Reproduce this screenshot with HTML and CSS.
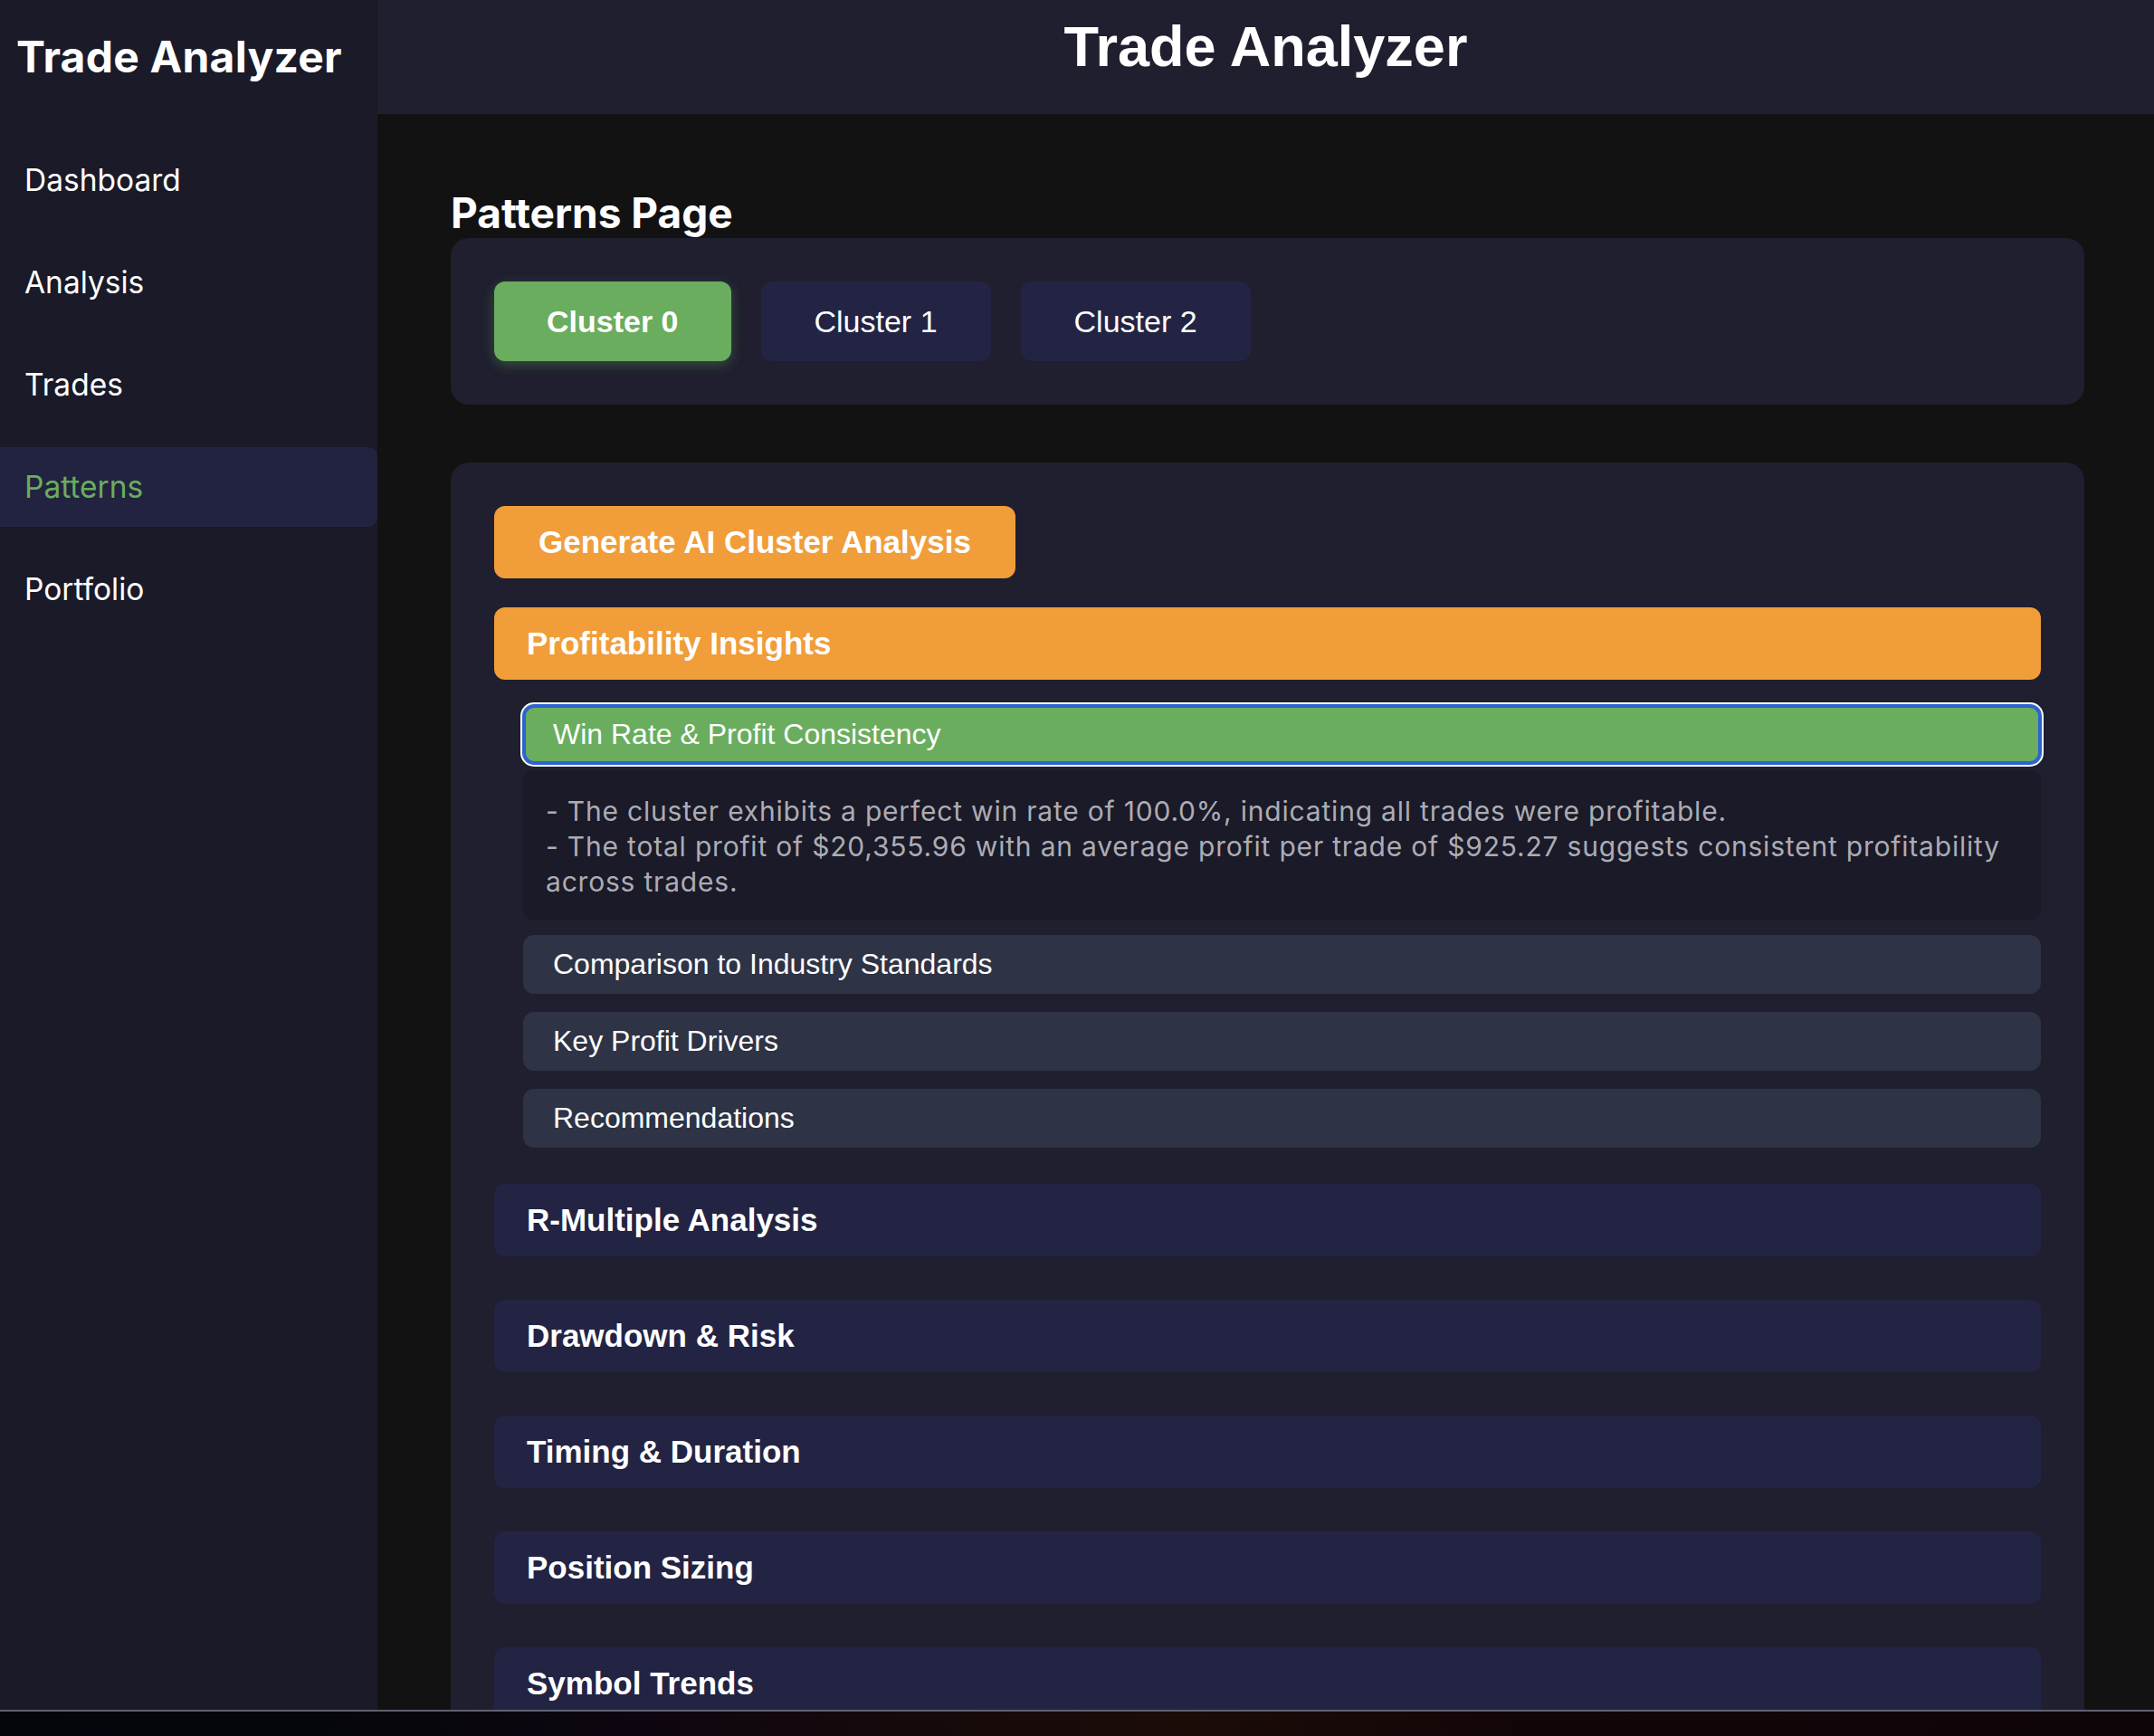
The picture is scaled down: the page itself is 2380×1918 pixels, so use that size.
FILE: index.html
```html
<!DOCTYPE html>
<html lang="en">
<head>
<meta charset="utf-8">
<title>Trade Analyzer</title>
<link rel="stylesheet" href="styles.css">
</head>
<body>
<div class="app">
  <aside class="sidebar">
    <div class="brand">Trade Analyzer</div>
    <nav class="nav">
      <a class="nav-item">Dashboard</a>
      <a class="nav-item">Analysis</a>
      <a class="nav-item">Trades</a>
      <a class="nav-item active">Patterns</a>
      <a class="nav-item">Portfolio</a>
    </nav>
  </aside>
  <div class="main">
    <header class="topbar"><h1>Trade Analyzer</h1></header>
    <main class="content">
      <h2 class="page-title">Patterns Page</h2>
      <section class="card cluster-card">
        <button class="cluster-btn selected">Cluster 0</button>
        <button class="cluster-btn">Cluster 1</button>
        <button class="cluster-btn">Cluster 2</button>
      </section>
      <section class="card analysis-card">
        <button class="generate-btn">Generate AI Cluster Analysis</button>
        <div class="section open">
          <div class="section-head orange">Profitability Insights</div>
          <div class="section-body">
            <div class="sub-open">
              <div class="sub-bar focused">Win Rate &amp; Profit Consistency</div>
              <div class="sub-desc">- The cluster exhibits a perfect win rate of 100.0%, indicating all trades were profitable.<br>- The total profit of $20,355.96 with an average profit per trade of $925.27 suggests consistent profitability across trades.</div>
            </div>
            <div class="sub-bar">Comparison to Industry Standards</div>
            <div class="sub-bar">Key Profit Drivers</div>
            <div class="sub-bar">Recommendations</div>
          </div>
        </div>
        <div class="section"><div class="section-head">R-Multiple Analysis</div></div>
        <div class="section"><div class="section-head">Drawdown &amp; Risk</div></div>
        <div class="section"><div class="section-head">Timing &amp; Duration</div></div>
        <div class="section"><div class="section-head">Position Sizing</div></div>
        <div class="section"><div class="section-head">Symbol Trends</div></div>
        <div class="section"><div class="section-head">Market Conditions</div></div>
      </section>
    </main>
  </div>
</div>
<div class="desk-strip"></div>
</body>
</html>
```

FILE: styles.css
```css
* { box-sizing: border-box; }

html, body {
  margin: 0;
  padding: 0;
  background: #121212;
  color: #ffffff;
  font-family: Inter, "Noto Sans", sans-serif;
}

.app {
  display: grid;
  grid-template-columns: 417px 1fr;
  min-height: 100vh;
}

.sidebar {
  background: #1a1a28;
  padding-top: 34px;
}

.brand {
  font-family: Inter, sans-serif;
  font-weight: 700;
  font-size: 48px;
  line-height: 58px;
  padding-left: 18px;
  letter-spacing: 0.2px;
  margin-bottom: 63px;
}

.nav {
  display: flex;
  flex-direction: column;
  gap: 25px;
}

.nav-item {
  display: block;
  height: 88px;
  line-height: 88px;
  padding-left: 27px;
  font-size: 33.5px;
  color: #ffffff;
  border-radius: 0 10px 10px 0;
}

.nav-item.active {
  background: #222340;
  color: #6aad5e;
}

.main {
  display: flex;
  flex-direction: column;
  min-width: 0;
}

.topbar {
  height: 126px;
  background: #1f1f30;
  text-align: center;
}

.topbar h1 {
  margin: 0;
  padding-top: 15px;
  font-family: "Liberation Sans", Arial, sans-serif;
  font-weight: 700;
  font-size: 63px;
  line-height: 72px;
}

.content {
  padding: 81px 77px 120px 81px;
}

.page-title {
  margin: 0;
  font-family: Inter, sans-serif;
  font-weight: 700;
  font-size: 46px;
  line-height: 56px;
}

.card {
  background: #1f1f2f;
  border-radius: 20px;
  padding: 48px;
}

.cluster-card {
  display: flex;
  gap: 33px;
  margin-bottom: 64px;
}

button {
  font-family: "Liberation Sans", Arial, sans-serif;
  border: none;
  color: #ffffff;
  cursor: pointer;
}

.cluster-btn {
  height: 88px;
  padding: 0 59px;
  font-size: 34px;
  background: #232444;
  border-radius: 12px;
}

.cluster-btn.selected {
  background: #6aad5e;
  font-weight: 700;
  padding: 0 58px;
  box-shadow: 0 4px 14px rgba(106, 173, 94, 0.35);
}

.generate-btn {
  height: 80px;
  padding: 0 49px;
  font-size: 35px;
  font-weight: 700;
  background: #f09d3a;
  border-radius: 12px;
  margin-bottom: 32px;
}

.section {
  margin-bottom: 48px;
}

.section.open {
  margin-bottom: 40px;
}

.section-head {
  height: 80px;
  display: flex;
  align-items: center;
  padding-left: 36px;
  background: #232444;
  border-radius: 12px;
  font-family: "Liberation Sans", Arial, sans-serif;
  font-weight: 700;
  font-size: 35px;
}

.section-head.orange {
  background: #f09d3a;
}

.section-body {
  margin-top: 28px;
  padding-left: 32px;
  display: flex;
  flex-direction: column;
  gap: 20px;
}

.sub-open {
  margin-bottom: -4px;
}

.sub-bar {
  height: 65px;
  display: flex;
  align-items: center;
  padding-left: 33px;
  background: #2e3345;
  border-radius: 12px;
  font-family: "Liberation Sans", Arial, sans-serif;
  font-size: 32px;
}

.sub-bar.focused {
  background: #6aad5e;
  box-shadow: inset 0 0 0 3px #2d62d2, 0 0 0 1px #2d62d2, 0 0 0 3px #ffffff;
}

.sub-desc {
  margin-top: 7px;
  background: #1a1a28;
  border-radius: 12px;
  padding: 26px 25px 23px 25px;
  font-family: Inter, sans-serif;
  font-size: 30px;
  letter-spacing: 0.8px;
  line-height: 39px;
  color: #acacb4;
}

.desk-strip {
  position: fixed;
  left: 0;
  right: 0;
  bottom: 0;
  height: 29px;
  border-top: 2px solid #5f6170;
  background: linear-gradient(90deg, #02060b 0%, #05060c 15%, #0e0610 30%, #170a0a 45%, #1b0c08 55%, #130608 70%, #0e0508 100%);
}
```
